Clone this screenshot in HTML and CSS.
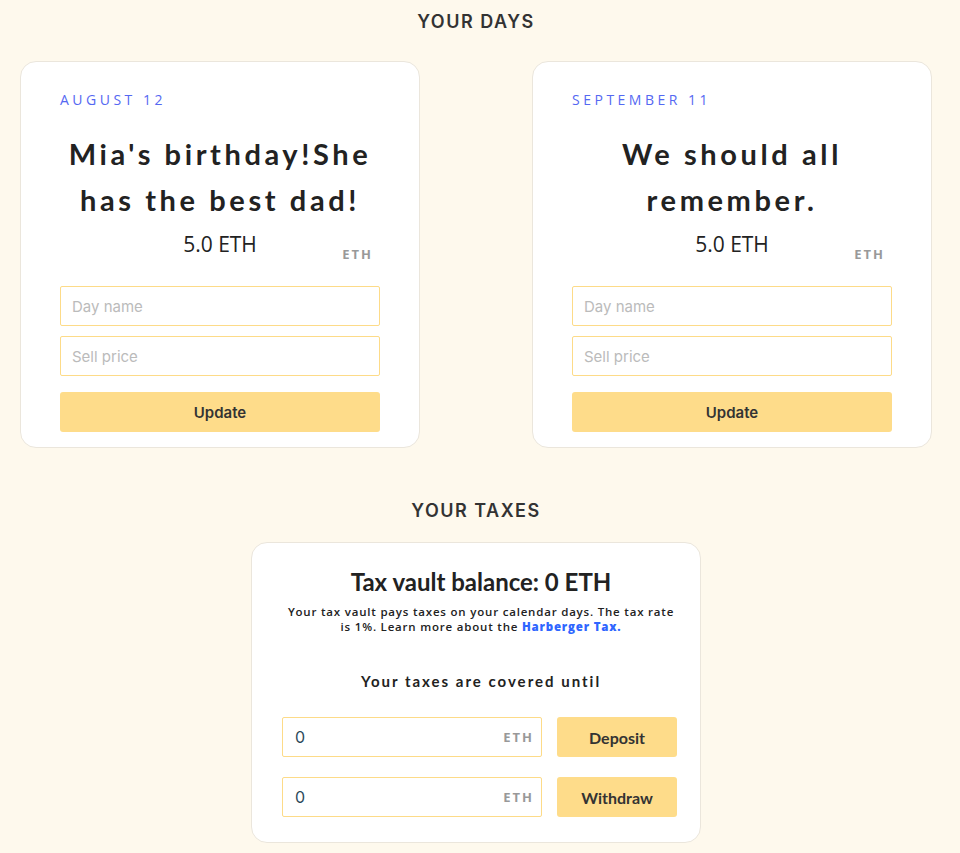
FILE: index.html
```html
<!DOCTYPE html>
<html lang="en">
<head>
    <meta charset="UTF-8">
    <meta name="viewport" content="width=device-width, initial-scale=1.0">
    <title>Your days</title>
    <link rel="stylesheet" href="styles.css">
</head>
<body>
    <div class="page">
        <h2 class="section-title">YOUR DAYS</h2>
        <div class="days">
            <div class="day-card">
                <div class="day-date">AUGUST 12</div>
                <h3 class="day-name">Mia's birthday!She has the best dad!</h3>
                <div class="day-price">
                    <span>5.0 ETH</span>
                    <span class="unit">ETH</span>
                </div>
                <input class="field" type="text" placeholder="Day name">
                <input class="field" type="text" placeholder="Sell price">
                <button class="btn btn-wide" type="button">Update</button>
            </div>
            <div class="day-card">
                <div class="day-date">SEPTEMBER 11</div>
                <h3 class="day-name">We should all remember.</h3>
                <div class="day-price">
                    <span>5.0 ETH</span>
                    <span class="unit">ETH</span>
                </div>
                <input class="field" type="text" placeholder="Day name">
                <input class="field" type="text" placeholder="Sell price">
                <button class="btn btn-wide" type="button">Update</button>
            </div>
        </div>

        <h2 class="section-title taxes-title">YOUR TAXES</h2>
        <div class="tax-card">
            <h3 class="tax-balance">Tax vault balance: 0 ETH</h3>
            <p class="tax-info">Your tax vault pays taxes on your calendar days. The tax rate is 1%. Learn more about the <a href="#">Harberger Tax.</a></p>
            <p class="tax-until">Your taxes are covered until</p>
            <div class="tax-row">
                <div class="amount">
                    <input class="field amount-input" type="text" value="0">
                    <span class="unit">ETH</span>
                </div>
                <button class="btn btn-small" type="button">Deposit</button>
            </div>
            <div class="tax-row">
                <div class="amount">
                    <input class="field amount-input" type="text" value="0">
                    <span class="unit">ETH</span>
                </div>
                <button class="btn btn-small" type="button">Withdraw</button>
            </div>
        </div>
    </div>
</body>
</html>
```

FILE: styles.css
```css
body {
    margin: 0;
    background: #fef9ed;
    font-family: "Open Sans", "Noto Sans", sans-serif;
    color: #222;
}
.page {
    width: 952px;
}
.section-title {
    margin: 0;
    padding-top: 11px;
    height: 61px;
    box-sizing: border-box;
    text-align: center;
    font-family: Inter, "Open Sans", sans-serif;
    font-size: 18px;
    font-weight: 600;
    letter-spacing: 1.5px;
    color: #333;
}
.days {
    display: flex;
    justify-content: space-between;
    align-items: flex-start;
    padding: 0 20px;
}
.day-card {
    width: 400px;
    box-sizing: border-box;
    background: white;
    border: 1px solid #ebe6dc;
    border-radius: 16px;
    padding: 28px 39px 15px;
    display: flex;
    flex-direction: column;
}
.day-date {
    font-size: 14px;
    letter-spacing: 3.5px;
    color: #5568f2;
    line-height: 20px;
}
.day-name {
    margin: 21px 0 0;
    text-align: center;
    font-family: Lato, "Open Sans", sans-serif;
    font-size: 29px;
    font-weight: 700;
    letter-spacing: 3.6px;
    line-height: 46px;
    color: #222;
}
.day-price {
    position: relative;
    text-align: center;
    font-size: 21px;
    line-height: 30px;
    color: #222;
    height: 44px;
    margin-top: 6px;
    margin-bottom: 13px;
}
.unit {
    font-size: 13px;
    font-weight: 700;
    letter-spacing: 2px;
    color: #999;
}
.day-price .unit {
    position: absolute;
    right: 7px;
    top: 15px;
    line-height: 20px;
}
.field {
    display: block;
    width: 100%;
    box-sizing: border-box;
    height: 40px;
    padding: 0 11px;
    border: 1px solid #fddb88;
    border-radius: 2px;
    font-family: Inter, "Open Sans", sans-serif;
    font-size: 15px;
    color: #2c4a5a;
    background: white;
    margin-bottom: 10px;
    outline: none;
}
.field::placeholder {
    color: #bbb;
}
.btn {
    height: 40px;
    border: none;
    border-radius: 3px;
    background: #fedc8a;
    color: #333;
    font-family: Inter, "Open Sans", sans-serif;
    font-size: 15px;
    font-weight: 600;
    cursor: pointer;
}
.btn-wide {
    width: 100%;
    margin-top: 6px;
}
.taxes-title {
    margin-top: 43px;
    padding-top: 9px;
    height: 51px;
}
.tax-card {
    width: 450px;
    box-sizing: border-box;
    margin: 0 auto;
    background: white;
    border: 1px solid #ebe6dc;
    border-radius: 16px;
    padding: 22px 20px 25px 30px;
    text-align: center;
}
.tax-balance {
    margin: 0;
    font-family: Lato, "Open Sans", sans-serif;
    font-size: 24px;
    font-weight: 700;
    line-height: 34px;
}
.tax-info {
    margin: 5px auto 0;
    width: 390px;
    font-size: 11.5px;
    font-weight: 600;
    letter-spacing: 0.8px;
    line-height: 15px;
}
.tax-info a {
    color: #2f66ff;
    font-weight: 800;
    text-decoration: none;
}
.tax-until {
    margin: 37px 0 26px;
    font-family: Lato, "Open Sans", sans-serif;
    font-size: 15px;
    font-weight: 700;
    letter-spacing: 2px;
    line-height: 20px;
}
.tax-row {
    display: flex;
    gap: 15px;
    margin-bottom: 20px;
}
.tax-row:last-child {
    margin-bottom: 0;
}
.amount {
    position: relative;
    width: 260px;
}
.amount-input {
    margin: 0;
    padding-left: 12px;
    font-size: 16px;
}
.amount .unit {
    position: absolute;
    right: 8px;
    top: 12px;
    line-height: 16px;
}
.btn-small {
    width: 120px;
    font-family: Lato, "Open Sans", sans-serif;
    font-size: 16px;
    font-weight: 700;
}
```
